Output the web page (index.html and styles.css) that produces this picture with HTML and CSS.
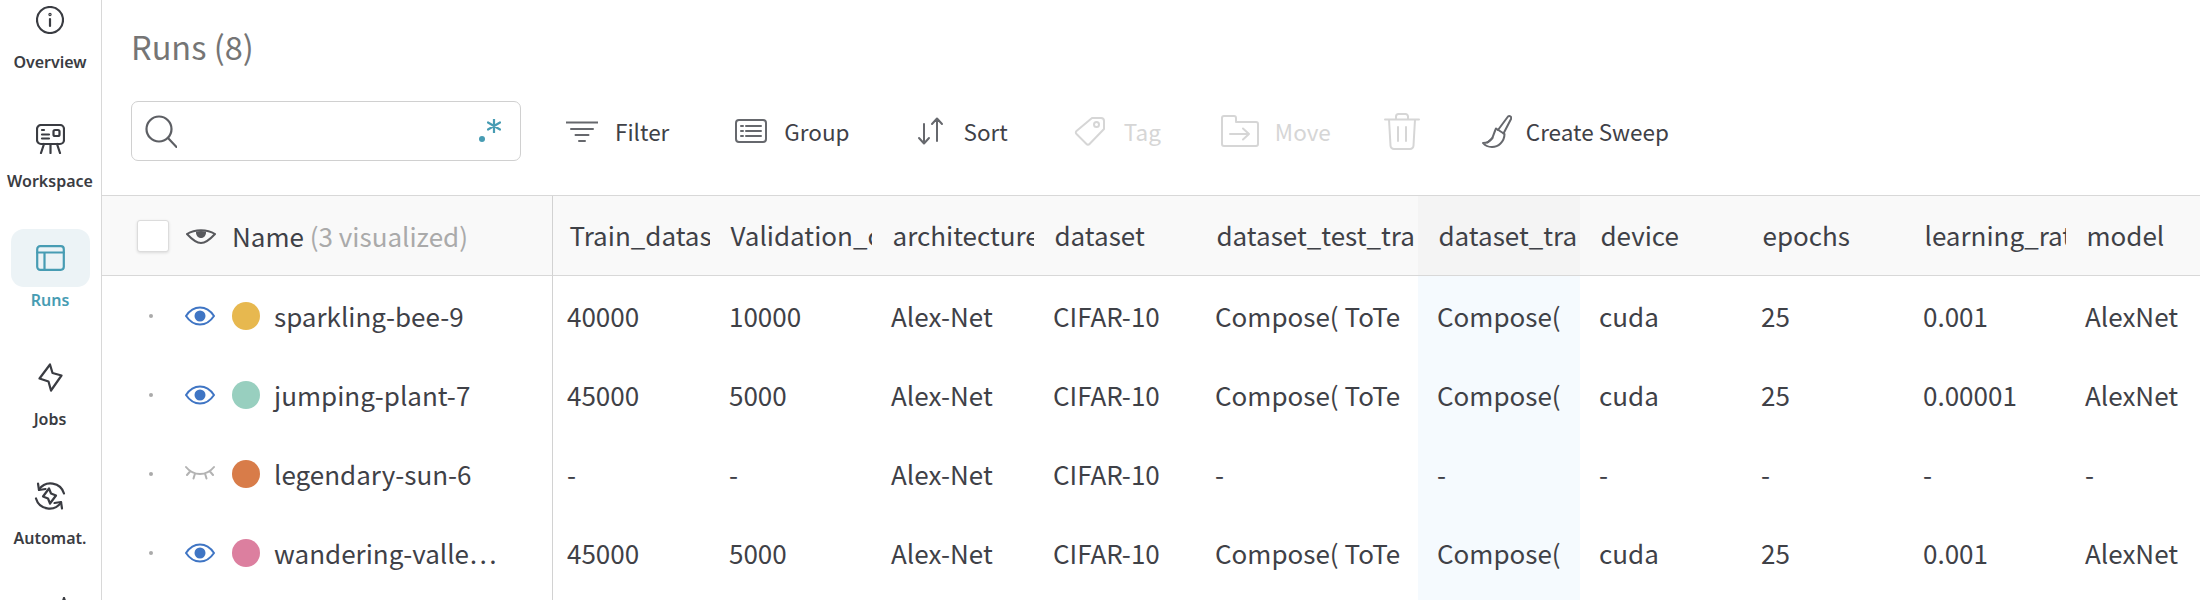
FILE: index.html
```html
<!DOCTYPE html>
<html lang="en">
<head>
<meta charset="utf-8">
<title>Runs</title>
<link rel="stylesheet" href="styles.css">
</head>
<body>
<aside class="sidebar">
  <nav class="nav">
    <a class="nav-item">
      <span class="nav-icon"><svg width="28" height="28" viewBox="0 0 28 28" class="ic"><circle cx="14" cy="14" r="13"/><path d="M14 13v7"/><circle cx="14" cy="8.500" r="0.600"/></svg></span>
      <span class="nav-label">Overview</span>
    </a>
    <a class="nav-item">
      <span class="nav-icon"><svg width="29" height="30" viewBox="0 0 29 30" class="ic"><rect x="1" y="1" width="27" height="19" rx="4"/><path d="M6 6h2M6 10.500h7M6 14.500h7"/><rect x="17.500" y="6" width="6" height="6" rx="1.500"/><path d="M8 20l-3 9M14.500 20v9M21 20l3 9"/></svg></span>
      <span class="nav-label">Workspace</span>
    </a>
    <a class="nav-item active">
      <span class="nav-icon"><svg width="29" height="26" viewBox="0 0 29 26" class="ic"><rect x="1.200" y="1.200" width="26.600" height="23.600" rx="3"/><path d="M1.200 7.500h26.600M8.500 7.500v17.300"/></svg></span>
      <span class="nav-label">Runs</span>
    </a>
    <a class="nav-item">
      <span class="nav-icon"><svg width="25" height="29" viewBox="0 0 25 29" class="ic"><path d="M12 1.500l2.500 8.500 9 2.500-10.500 15-2.500-9-9-3z"/></svg></span>
      <span class="nav-label">Jobs</span>
    </a>
    <a class="nav-item">
      <span class="nav-icon"><svg width="32" height="32" viewBox="0 0 32 32" class="ic"><path d="M5 9.500A14 14 0 0 1 30 13.500"/><path d="M4 3.500l1 6.500 6.500-1"/><path d="M27 22.500A14 14 0 0 1 2 18.500"/><path d="M28 28.500l-1-6.500-6.500 1"/><path d="M15 8.500l2 5 5 2-6 8-2-5-5-2z"/></svg></span>
      <span class="nav-label">Automat.</span>
    </a>
    <a class="nav-item">
      <span class="nav-icon nav-icon-top"><svg width="32" height="32" viewBox="0 0 32 32" class="ic"><path d="M30 1l-3 9M30 1l3 9"/></svg></span>
    </a>
  </nav>
</aside>
<main class="main">
  <h1 class="title">Runs (8)</h1>
  <div class="toolbar">
    <div class="search">
      <svg width="32" height="33" viewBox="0 0 32 33" class="ic search-ic"><circle cx="14" cy="14" r="12.500"/><path d="M23 23l8.500 9"/></svg>
      <span class="regex"><span class="regex-dot"></span><svg width="14" height="14" viewBox="0 0 14 14" class="ic regex-star"><path d="M7 0v14M1 3.500l12 7M13 3.500l-12 7"/></svg></span>
    </div>
    <button class="tool tool-filter"><svg width="32" height="21" viewBox="0 0 32 21" class="ic thin"><path d="M0 1.500h32M5 8h22M9.500 14h13M13 20h6"/></svg>Filter</button>
    <button class="tool tool-group"><svg width="32" height="24" viewBox="0 0 32 24" class="ic thin"><rect x="1" y="1" width="30" height="22" rx="3"/><path d="M6 7h2M11 7h15M6 12h2M11 12h15M6 17h2M11 17h15"/></svg>Group</button>
    <button class="tool tool-sort"><svg width="32" height="28" viewBox="0 0 32 28" class="ic thin"><path d="M9 7v19M4 21l5 5.500 5-5.500M22 24V2M17 7l5-5.500 5 5.500"/></svg>Sort</button>
    <button class="tool tool-tag disabled"><svg width="32" height="30" viewBox="0 0 32 30" class="ic thin"><path d="M18 2h9a3 3 0 0 1 3 3v8L15.500 28a2 2 0 0 1-3 0L2.500 18a2 2 0 0 1 0-3z"/><circle cx="22.500" cy="8.500" r="2.500"/></svg>Tag</button>
    <button class="tool tool-move disabled"><svg width="40" height="32" viewBox="0 0 40 32" class="ic thin"><path d="M2 3a2 2 0 0 1 2-2h10a2 2 0 0 1 2 2v4h20a2 2 0 0 1 2 2v20a2 2 0 0 1-2 2H4a2 2 0 0 1-2-2z"/><path d="M10 19h19M23 13.500l6 5.500-6 5.500"/></svg>Move</button>
    <span class="tool tool-trash disabled"><svg width="36" height="37" viewBox="0 0 36 37" class="ic thin wide"><path d="M1 6.500h34M12 6.500V3.500A2.500 2.500 0 0 1 14.500 1h7A2.500 2.500 0 0 1 24 3.500v3M5 6.500l1.500 26A3.500 3.500 0 0 0 10 36h16a3.500 3.500 0 0 0 3.500-3.500l1.500-26M14 14v14M22 14v14"/></svg></span>
    <button class="tool tool-sweep"><svg width="30" height="34" viewBox="0 0 30 34" class="ic thin"><path d="M16 16L26 2.500a2 2 0 0 1 3 2.500L21.500 19.500"/><path d="M14 14.500l8.500 5.500c0 3-1.500 7-4 9.500-2 2-5 3.500-8.500 3.500-4 0-7-1.500-9-4 3.500 0 7-1.500 9-4.500 1-1.500 2-5.500 4-10z"/><path d="M10.500 24l-5 4.500"/></svg>Create Sweep</button>
  </div>
  <div class="table-wrap">
    <table class="runs">
      <colgroup>
        <col class="c-name"><col class="c-first"><col class="c-std"><col class="c-std"><col class="c-std"><col class="c-wide"><col class="c-std"><col class="c-std"><col class="c-std"><col class="c-std"><col class="c-std">
      </colgroup>
      <thead>
        <tr>
          <th class="name-col">
            <div class="name-head">
              <span class="check"></span>
              <svg width="30" height="16" viewBox="0 0 30 16" class="head-eye"><path class="lens" d="M1 6C9 1 21 1 29 6 23 12.500 19 15 15 15S7 12.500 1 6z"/><path class="pupil" d="M10 3.500c3-.8 7-.8 10 0 .3 4-2 6.500-5 6.500s-5.300-2.500-5-6.500z"/></svg>
              <span>Name <span class="muted">(3 visualized)</span></span>
            </div>
          </th>
          <th class="first">Train_datas</th><th>Validation_c</th><th>architecture</th><th>dataset</th><th>dataset_test_tra</th><th class="hl">dataset_tra</th><th>device</th><th>epochs</th><th>learning_rate</th><th>model</th>
        </tr>
      </thead>
      <tbody>
        <tr>
          <td class="name-col"><div class="run"><span class="bullet"></span><svg width="30" height="20" viewBox="0 0 30 20" class="eye"><path class="lens" d="M1 10C5 4 10 1.500 15 1.500S25 4 29 10c-4 6-9 8.500-14 8.500S5 16 1 10z"/><circle class="pupil" cx="15" cy="10" r="5.500"/></svg><span class="dot yellow"></span><span class="run-name">sparkling-bee-9</span></div></td>
          <td class="first">40000</td><td>10000</td><td>Alex-Net</td><td>CIFAR-10</td><td>Compose( ToTe</td><td class="hl">Compose(</td><td>cuda</td><td>25</td><td>0.001</td><td>AlexNet</td>
        </tr>
        <tr>
          <td class="name-col"><div class="run"><span class="bullet"></span><svg width="30" height="20" viewBox="0 0 30 20" class="eye"><path class="lens" d="M1 10C5 4 10 1.500 15 1.500S25 4 29 10c-4 6-9 8.500-14 8.500S5 16 1 10z"/><circle class="pupil" cx="15" cy="10" r="5.500"/></svg><span class="dot teal"></span><span class="run-name">jumping-plant-7</span></div></td>
          <td class="first">45000</td><td>5000</td><td>Alex-Net</td><td>CIFAR-10</td><td>Compose( ToTe</td><td class="hl">Compose(</td><td>cuda</td><td>25</td><td>0.00001</td><td>AlexNet</td>
        </tr>
        <tr>
          <td class="name-col"><div class="run"><span class="bullet"></span><svg width="30" height="20" viewBox="0 0 30 20" class="eye closed"><path d="M1 3c4 5 9 7 14 7s10-2 14-7M5 7.500L2 11M10 9.500l-1.500 5M20 9.500l1.500 5M25 7.500l3 3.500"/></svg><span class="dot orange"></span><span class="run-name">legendary-sun-6</span></div></td>
          <td class="first">-</td><td>-</td><td>Alex-Net</td><td>CIFAR-10</td><td>-</td><td class="hl">-</td><td>-</td><td>-</td><td>-</td><td>-</td>
        </tr>
        <tr>
          <td class="name-col"><div class="run"><span class="bullet"></span><svg width="30" height="20" viewBox="0 0 30 20" class="eye"><path class="lens" d="M1 10C5 4 10 1.500 15 1.500S25 4 29 10c-4 6-9 8.500-14 8.500S5 16 1 10z"/><circle class="pupil" cx="15" cy="10" r="5.500"/></svg><span class="dot pink"></span><span class="run-name">wandering-valle…</span></div></td>
          <td class="first">45000</td><td>5000</td><td>Alex-Net</td><td>CIFAR-10</td><td>Compose( ToTe</td><td class="hl">Compose(</td><td>cuda</td><td>25</td><td>0.001</td><td>AlexNet</td>
        </tr>
        <tr>
          <td class="name-col"></td><td class="first"></td><td></td><td></td><td></td><td></td><td class="hl"></td><td></td><td></td><td></td><td></td>
        </tr>
      </tbody>
    </table>
  </div>
</main>
</body>
</html>
```

FILE: styles.css
```css
* { box-sizing: border-box; }
html, body { margin: 0; height: 600px; overflow: hidden; background: #fff; }
body {
  display: flex;
  font-family: "Noto Sans CJK SC", "Noto Sans", sans-serif;
  color: #3f4147;
}
.ic { fill: none; stroke: currentColor; stroke-width: 2.200; stroke-linecap: round; stroke-linejoin: round; }
.ic.thin { stroke-width: 2; }
.sidebar { flex: 0 0 102px; height: 600px; border-right: 1.500px solid #d8d8d8; overflow: hidden; }
.nav { display: flex; flex-direction: column; align-items: center; margin-top: -9px; width: 100px; }
.nav-item { display: flex; flex-direction: column; align-items: center; height: 119px; color: #3a3c42; }
.nav-icon { display: flex; align-items: center; justify-content: center; width: 79px; height: 58px; border-radius: 13px; }
.nav-icon-top { align-items: flex-start; padding-top: 11px; }
.nav-label { margin-top: 2px; font-family: "Noto Sans", sans-serif; font-weight: 600; font-size: 16px; line-height: 22px; }
.active { color: #479cb3; }
.active .nav-icon { background: #ecf3f6; }
.main { flex: 1; min-width: 0; display: flex; flex-direction: column; }
.title { margin: 28px 0 0 29px; height: 73px; font-weight: 400; font-size: 32.500px; line-height: 36px; color: #757575; }
.toolbar { display: flex; align-items: center; height: 60px; margin-left: 29px; font-size: 22.500px; }
.search { position: relative; flex: 0 0 390px; height: 60px; border: 1.500px solid #d0d0d0; border-radius: 7px; display: flex; align-items: center; padding-left: 13px; color: #5d5f64; }
.regex { position: absolute; left: 347px; top: 15px; width: 30px; height: 30px; color: #479cb3; }
.regex-dot { position: absolute; left: 0; top: 19px; width: 6px; height: 6px; border-radius: 50%; background: currentColor; }
.regex-star { position: absolute; left: 8px; top: 2px; }
.tool { display: flex; align-items: center; gap: 18px; padding: 0; border: 0; background: none; font: inherit; color: #3f4147; line-height: 30px; }
.tool .ic { color: #66686d; flex: none; }
.disabled, .disabled .ic { color: #d6d6d6; }
.tool-filter { margin-left: 45px; gap: 17px; }
.tool-group { margin-left: 66px; gap: 17px; }
.tool-sort { margin-left: 65px; gap: 17px; }
.tool-tag { margin-left: 66px; gap: 18px; }
.tool-move { margin-left: 59px; gap: 15px; }
.tool-trash { margin-left: 53px; }
.tool-sweep { margin-left: 62px; gap: 14px; }
.table-wrap { margin-top: 34px; border-top: 1.500px solid #d8d8d8; overflow: hidden; flex: 1; }
.runs { table-layout: fixed; width: 2126px; border-collapse: separate; border-spacing: 0; font-size: 26px; }
.c-name { width: 451px; }
.c-first { width: 157px; }
.c-std { width: 162px; }
.c-wide { width: 222px; }
th, td { padding: 0 0 0 19px; white-space: nowrap; overflow: hidden; text-align: left; font-weight: 400; }
th { height: 80px; padding: 0 0 2px 20.500px; background: #f9f9f9; border-bottom: 1.500px solid #d8d8d8; }
td { height: 79px; }
th.first { padding-left: 16.500px; }
td.first { padding-left: 14px; }
th.hl { background: #f4f4f4; }
td.hl { background: #f5fafe; }
th.name-col, td.name-col { padding: 0; border-right: 1.500px solid #d2d2d2; }
.name-head { display: flex; align-items: center; padding-left: 35px; gap: 16px; }
.check { width: 32px; height: 32px; background: #fff; border: 1px solid #dcdcdc; border-radius: 3px; box-shadow: 0 1px 3px rgba(0,0,0,.12); margin-right: 1px; }
.muted { color: #aaa; }
.head-eye .lens { fill: none; stroke: #58595d; stroke-width: 2; }
.head-eye .pupil { fill: #58595d; }
.run { display: flex; align-items: center; padding-left: 47px; }
.bullet { width: 4px; height: 4px; border-radius: 50%; background: #aaa; margin-right: 32px; }
.eye { flex: none; margin-right: 17px; }
.eye .lens { fill: none; stroke: #3f75c4; stroke-width: 2; }
.eye .pupil { fill: #3f75c4; }
.closed { fill: none; stroke: #b3b3b3; stroke-width: 2; stroke-linecap: round; }
.dot { width: 28px; height: 28px; border-radius: 50%; margin-right: 14px; flex: none; }
.yellow { background: #e7b84f; }
.teal { background: #98cfbf; }
.orange { background: #d87c49; }
.pink { background: #dc7f9f; }
```
